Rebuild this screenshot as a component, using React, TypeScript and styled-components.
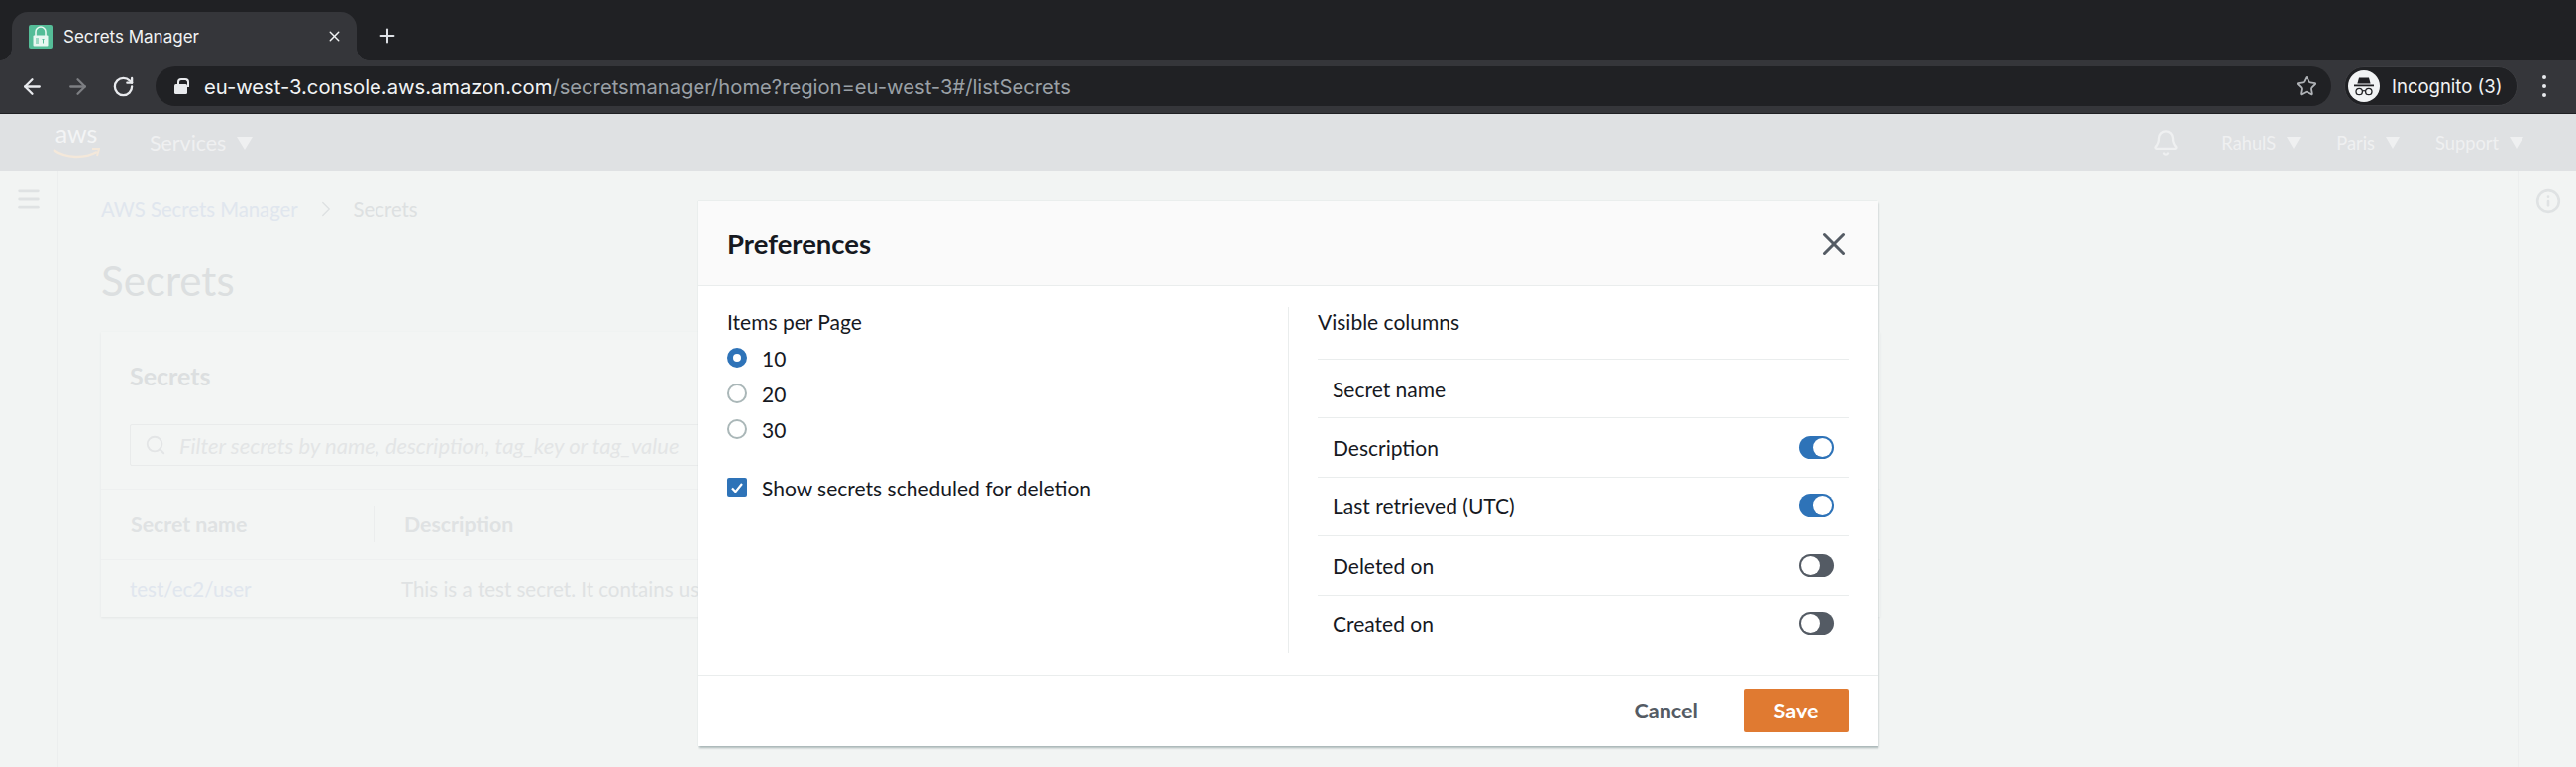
import React from 'react'
import styled, { createGlobalStyle } from 'styled-components'
import { ArrowLeft, ArrowRight, Bell, ChevronRight, Info, Menu, Plus, RotateCw, Search, Star, X } from 'lucide-react'

const GlobalStyle = createGlobalStyle`
  html, body { margin: 0; padding: 0; background: #f2f4f3; }
  * { box-sizing: border-box; }
  body { font-family: Lato, "Open Sans", sans-serif; }
`

const Screen = styled.div`
  position: relative;
  width: 2600px;
  height: 774px;
  overflow: hidden;
  display: flex;
  flex-direction: column;
`

/* browser chrome */
const TabStrip = styled.div`
  height: 61px;
  flex: none;
  background: #202124;
  padding: 12px 0 0 12px;
  display: flex;
  align-items: stretch;
`

const Tab = styled.div`
  position: relative;
  width: 348px;
  background: #35363a;
  border-radius: 16px 16px 0 0;
  padding: 0 14px 0 17px;
  display: flex;
  align-items: center;
  color: #f1f3f4;
  font: 400 17px Inter, sans-serif;

  &::before, &::after {
    content: '';
    position: absolute;
    bottom: 0;
    width: 12px;
    height: 12px;
  }
  &::before {
    left: -12px;
    background: radial-gradient(circle at 0 0, transparent 11.5px, #35363a 12px);
  }
  &::after {
    right: -12px;
    background: radial-gradient(circle at 100% 0, transparent 11.5px, #35363a 12px);
  }
`

const TabTitle = styled.span`
  flex: 1;
  margin-left: 11px;
`

const NewTab = styled.div`
  width: 62px;
  display: flex;
  align-items: center;
  justify-content: center;
  color: #dee1e6;
  padding-bottom: 2px;
`

const Toolbar = styled.div`
  height: 54px;
  flex: none;
  background: #35363a;
  border-bottom: 1px solid #1f2023;
  padding: 6px 0 7px 0;
  display: flex;
  align-items: stretch;
`

const NavButton = styled.div<{ $dim?: boolean }>`
  width: 46px;
  display: flex;
  align-items: center;
  justify-content: center;
  color: ${p => (p.$dim ? '#7d7f83' : '#e8eaed')};
`

const NavButtons = styled.div`
  display: flex;
  width: 157px;
  padding-left: 9px;
`

const AddressBar = styled.div`
  width: 2196px;
  background: #202124;
  border-radius: 20px;
  padding: 0 14px 0 19px;
  display: flex;
  align-items: center;
  font: 400 20.2px Inter, sans-serif;
`

const Lock = styled.span`
  position: relative;
  width: 13px;
  height: 10px;
  margin-top: 6px;
  margin-right: 17px;
  background: #e8eaed;
  border-radius: 1.5px;

  &::before {
    content: '';
    position: absolute;
    left: 2.5px;
    top: -6px;
    width: 8px;
    height: 7px;
    border: 2px solid #e8eaed;
    border-bottom: 0;
    border-radius: 4px 4px 0 0;
  }
`

const Host = styled.span`
  color: #f1f3f4;
`

const UrlPath = styled.span`
  flex: 1;
  color: #9aa0a6;
`

const Profile = styled.div`
  width: 175px;
  margin-left: 13px;
  background: #202124;
  border: 1px solid #3c3d41;
  border-radius: 20px;
  padding: 0 0 0 3px;
  display: flex;
  align-items: center;
  gap: 12px;
  color: #f1f3f4;
  font: 400 18.5px Inter, sans-serif;
`

const DotsButton = styled.div`
  flex: 1;
  display: flex;
  flex-direction: column;
  align-items: center;
  justify-content: center;
  gap: 5px;
  padding-right: 5px;
`

const Dot = styled.span`
  width: 4px;
  height: 4px;
  border-radius: 50%;
  background: #e8eaed;
`

/* dimmed console behind the dialog */
const ConsoleNav = styled.div`
  height: 58px;
  flex: none;
  background: #dfe1e3;
  display: flex;
  align-items: center;
  padding: 0 53px 0 53px;
  color: #eff0f1;
  font-size: 18.3px;
`

const AwsLogo = styled.div`
  width: 48px;
  height: 36px;
  margin-bottom: 3px;
  display: flex;
  flex-direction: column;
  align-items: center;
  color: #f3f4f5;
  font-size: 25px;
  line-height: 18px;
  margin-right: 50px;

  svg {
    margin-top: 6px;
    flex: none;
  }
`

const NavMenu = styled.span<{ $gap?: number }>`
  display: flex;
  align-items: center;
  gap: 11px;
  margin-right: ${p => p.$gap ?? 0}px;
`

const ServicesMenu = styled(NavMenu)`
  font-size: 21.4px;
`

const NavSpacer = styled.div`
  flex: 1;
`

const Caret = styled.span`
  width: 0;
  height: 0;
  border-left: 7px solid transparent;
  border-right: 7px solid transparent;
  border-top: 12px solid #eff0f1;
`

const ServicesCaret = styled(Caret)`
  border-left-width: 8px;
  border-right-width: 8px;
  border-top-width: 13px;
`

const ConsoleBody = styled.div`
  flex: 1;
  display: flex;
  background: #f2f4f3;
`

const SideRail = styled.div`
  width: 59px;
  flex: none;
  border-right: 1px solid #eceeee;
  padding: 14px 0 0 15px;
  color: #dfe2e3;
`

const Content = styled.div`
  flex: 1;
  padding: 24px 0 0 43px;
`

const InfoRail = styled.div`
  width: 59px;
  flex: none;
  border-left: 1px solid #eceeee;
  padding: 17px 0 0 17px;
  color: #dfe2e3;
`

const Crumbs = styled.div`
  height: 28px;
  display: flex;
  align-items: center;
  font-size: 20.3px;
  color: #dde0e1;
`

const CrumbLink = styled.span`
  color: #e0e6ee;
`

const CrumbChevron = styled(ChevronRight)`
  margin: 0 15px;
`

const PageTitle = styled.h1`
  margin: 30px 0 0;
  height: 56px;
  font-size: 42px;
  line-height: 56px;
  font-weight: 400;
  color: #dcdfe0;
`

const Panel = styled.section`
  margin-top: 24px;
  width: 1796px;
  height: 288px;
  background: #f3f5f4;
  box-shadow: 0 1px 2px #e3e6e6;
`

const PanelHead = styled.div`
  height: 93px;
  padding: 29px 0 0 29px;
  font-size: 25px;
  line-height: 30px;
  font-weight: 700;
  color: #dcdfe0;
`

const SearchBox = styled.div`
  margin-left: 29px;
  width: 1700px;
  height: 42px;
  border: 1px solid #e9ebeb;
  border-radius: 2px;
  display: flex;
  align-items: center;
  gap: 13px;
  padding-left: 14px;
  font-size: 22px;
  font-style: italic;
  color: #e3e5e6;
`

const TableHead = styled.div`
  margin-top: 23px;
  height: 72px;
  border-top: 1px solid #eef0f0;
  border-bottom: 1px solid #eef0f0;
  display: grid;
  grid-template-columns: 245px 1fr;
  align-items: center;
  padding-left: 30px;
  font-size: 21.3px;
  font-weight: 700;
  color: #dfe2e3;
`

const HeadCell = styled.div<{ $split?: boolean }>`
  height: 36px;
  line-height: 36px;
  ${p => (p.$split ? 'border-left: 1px solid #ebeded; padding-left: 30px;' : '')}
`

const TableRow = styled.div`
  height: 58px;
  display: grid;
  grid-template-columns: 274px 1fr;
  align-items: center;
  padding-left: 29px;
  font-size: 20.5px;
  color: #dfe2e3;
`

const RowLink = styled.span`
  color: #e0e6ee;
`

/* the dialog */
const Dialog = styled.div`
  position: absolute;
  left: 705px;
  top: 203px;
  width: 1190px;
  height: 550px;
  background: #fff;
  display: flex;
  flex-direction: column;
  box-shadow: 1px 2px 2px #aab7b8, -1px 0 1px #c4cdcd;
  color: #16191f;
  font-size: 21px;
`

const DialogHead = styled.div`
  height: 86px;
  flex: none;
  background: #fafafa;
  border-bottom: 1px solid #eaeded;
  padding: 0 25px 0 29px;
  display: flex;
  align-items: center;
  justify-content: space-between;
  color: #16191f;
  font-size: 27.5px;
  font-weight: 700;
`

const CloseButton = styled.div`
  display: flex;
  color: #545b64;
`

const DialogBody = styled.div`
  flex: 1;
  display: flex;
  align-items: stretch;
  padding: 21px 0 22px;
`

const LeftColumn = styled.div`
  width: 596px;
  flex: none;
  border-right: 1px solid #eaeded;
  padding-left: 29px;
`

const RightColumn = styled.div`
  flex: 1;
  padding: 0 29px;
`

const FieldLabel = styled.div`
  height: 30px;
  line-height: 30px;
`

const RadioGroup = styled.div`
  margin-top: 3px;
`

const OptionRow = styled.div`
  height: 36px;
  display: flex;
  align-items: center;
  gap: 15px;
`

const Radio = styled.span<{ $on?: boolean }>`
  width: 20px;
  height: 20px;
  border-radius: 50%;
  background: #fff;
  border: ${p => (p.$on ? '6px solid #2e73b8' : '2px solid #aab7b8')};
`

const CheckBox = styled.span`
  width: 20px;
  height: 20px;
  border-radius: 2px;
  background: #2e73b8;
  display: flex;
  align-items: center;
  justify-content: center;
`

const CheckRow = styled(OptionRow)`
  margin-top: 23px;
`

const ColumnList = styled.div`
  margin-top: 22px;
`

const ColumnRow = styled.div`
  height: 59.4px;
  border-top: 1px solid #eaeded;
  padding: 0 15px;
  display: flex;
  align-items: center;
  justify-content: space-between;
`

const Toggle = styled.span<{ $on?: boolean }>`
  position: relative;
  width: 35px;
  height: 23px;
  border-radius: 12px;
  background: ${p => (p.$on ? '#2e73b8' : '#545b64')};

  &::after {
    content: '';
    position: absolute;
    top: 2px;
    ${p => (p.$on ? 'right: 2px;' : 'left: 2px;')}
    width: 19px;
    height: 19px;
    border-radius: 50%;
    background: #fff;
  }
`

const DialogFoot = styled.div`
  height: 73px;
  flex: none;
  border-top: 1px solid #eaeded;
  padding: 0 29px 1px 0;
  display: flex;
  align-items: center;
  justify-content: flex-end;
  gap: 46px;
  font-size: 21.6px;
`

const CancelButton = styled.span`
  color: #545b64;
  font-weight: 700;
`

const SaveButton = styled.span`
  width: 106px;
  height: 44px;
  border-radius: 2px;
  background: #e07a31;
  color: #fff;
  font-weight: 700;
  display: flex;
  align-items: center;
  justify-content: center;
`

const Favicon = () => (
  <svg width="24" height="24" viewBox="0 0 24 24">
    <rect width="24" height="24" rx="2" fill="#55bd98" />
    <path d="M7 11V7a5 5 0 0 1 10 0v4" fill="none" stroke="#e8f7f1" strokeWidth="1.6" />
    <rect x="4.5" y="10.5" width="15" height="11" rx="1" fill="#e8f7f1" />
    <path d="M7 14h3M7 16h3M7 18h3M13.5 14.5h2M14.5 14.5v4" stroke="#55bd98" strokeWidth="1" />
  </svg>
)

const IncognitoAvatar = () => (
  <svg width="32" height="32" viewBox="0 0 32 32">
    <circle cx="16" cy="16" r="16" fill="#f1f3f4" />
    <path d="M11 7.5h10l1.6 6H9.4z" fill="#202124" />
    <rect x="6" y="14.5" width="20" height="1.8" fill="#202124" />
    <circle cx="11.2" cy="21.5" r="3.2" fill="none" stroke="#202124" strokeWidth="1.3" />
    <circle cx="20.8" cy="21.5" r="3.2" fill="none" stroke="#202124" strokeWidth="1.3" />
    <path d="M14.4 21c1-.6 2.2-.6 3.2 0" fill="none" stroke="#202124" strokeWidth="1.2" />
  </svg>
)

const columns = [
  { name: 'Secret name' },
  { name: 'Description', on: true },
  { name: 'Last retrieved (UTC)', on: true },
  { name: 'Deleted on', on: false },
  { name: 'Created on', on: false },
]

export default function App() {
  return (
    <Screen>
      <GlobalStyle />
      <TabStrip>
        <Tab>
          <Favicon />
          <TabTitle>Secrets Manager</TabTitle>
          <X size={17} strokeWidth={2} />
        </Tab>
        <NewTab>
          <Plus size={22} strokeWidth={2.2} />
        </NewTab>
      </TabStrip>
      <Toolbar>
        <NavButtons>
          <NavButton><ArrowLeft size={25} strokeWidth={2.2} /></NavButton>
          <NavButton $dim><ArrowRight size={25} strokeWidth={2.2} /></NavButton>
          <NavButton><RotateCw size={23} strokeWidth={2.4} /></NavButton>
        </NavButtons>
        <AddressBar>
          <Lock />
          <Host>eu-west-3.console.aws.amazon.com</Host>
          <UrlPath>/secretsmanager/home?region=eu-west-3#/listSecrets</UrlPath>
          <Star size={22} strokeWidth={2} color="#b0b3b7" />
        </AddressBar>
        <Profile>
          <IncognitoAvatar />
          Incognito (3)
        </Profile>
        <DotsButton>
          <Dot />
          <Dot />
          <Dot />
        </DotsButton>
      </Toolbar>
      <ConsoleNav>
        <AwsLogo>
          aws
          <svg width="48" height="12" viewBox="0 0 48 12">
            <path d="M1 2c13 9 31 9 44 2" fill="none" stroke="#f4e8da" strokeWidth="2.4" />
            <path d="M40 1l7 0-2 7" fill="none" stroke="#f4e8da" strokeWidth="2" />
          </svg>
        </AwsLogo>
        <ServicesMenu>Services <ServicesCaret /></ServicesMenu>
        <NavSpacer />
        <NavMenu $gap={42}><Bell size={28} strokeWidth={2} color="#eff0f1" /></NavMenu>
        <NavMenu $gap={36}>RahulS <Caret /></NavMenu>
        <NavMenu $gap={36}>Paris <Caret /></NavMenu>
        <NavMenu>Support <Caret /></NavMenu>
      </ConsoleNav>
      <ConsoleBody>
        <SideRail>
          <Menu size={28} strokeWidth={2.4} />
        </SideRail>
        <Content>
          <Crumbs>
            <CrumbLink>AWS Secrets Manager</CrumbLink>
            <CrumbChevron size={26} strokeWidth={1.2} />
            Secrets
          </Crumbs>
          <PageTitle>Secrets</PageTitle>
          <Panel>
            <PanelHead>Secrets</PanelHead>
            <SearchBox>
              <Search size={22} strokeWidth={2} />
              Filter secrets by name, description, tag_key or tag_value
            </SearchBox>
            <TableHead>
              <HeadCell>Secret name</HeadCell>
              <HeadCell $split>Description</HeadCell>
            </TableHead>
            <TableRow>
              <RowLink>test/ec2/user</RowLink>
              <span>This is a test secret. It contains user credentials.</span>
            </TableRow>
          </Panel>
        </Content>
        <InfoRail>
          <Info size={26} strokeWidth={2.4} />
        </InfoRail>
      </ConsoleBody>

      <Dialog>
        <DialogHead>
          Preferences
          <CloseButton><X size={38} strokeWidth={1.9} /></CloseButton>
        </DialogHead>
        <DialogBody>
          <LeftColumn>
            <FieldLabel>Items per Page</FieldLabel>
            <RadioGroup>
              <OptionRow><Radio $on />10</OptionRow>
              <OptionRow><Radio />20</OptionRow>
              <OptionRow><Radio />30</OptionRow>
            </RadioGroup>
            <CheckRow>
              <CheckBox>
                <svg width="14" height="14" viewBox="0 0 14 14">
                  <path d="M2 7.5l3.4 3.6L12 3" fill="none" stroke="#fff" strokeWidth="2.2" />
                </svg>
              </CheckBox>
              Show secrets scheduled for deletion
            </CheckRow>
          </LeftColumn>
          <RightColumn>
            <FieldLabel>Visible columns</FieldLabel>
            <ColumnList>
              {columns.map(c => (
                <ColumnRow key={c.name}>
                  {c.name}
                  {c.on !== undefined && <Toggle $on={c.on} />}
                </ColumnRow>
              ))}
            </ColumnList>
          </RightColumn>
        </DialogBody>
        <DialogFoot>
          <CancelButton>Cancel</CancelButton>
          <SaveButton>Save</SaveButton>
        </DialogFoot>
      </Dialog>
    </Screen>
  )
}
